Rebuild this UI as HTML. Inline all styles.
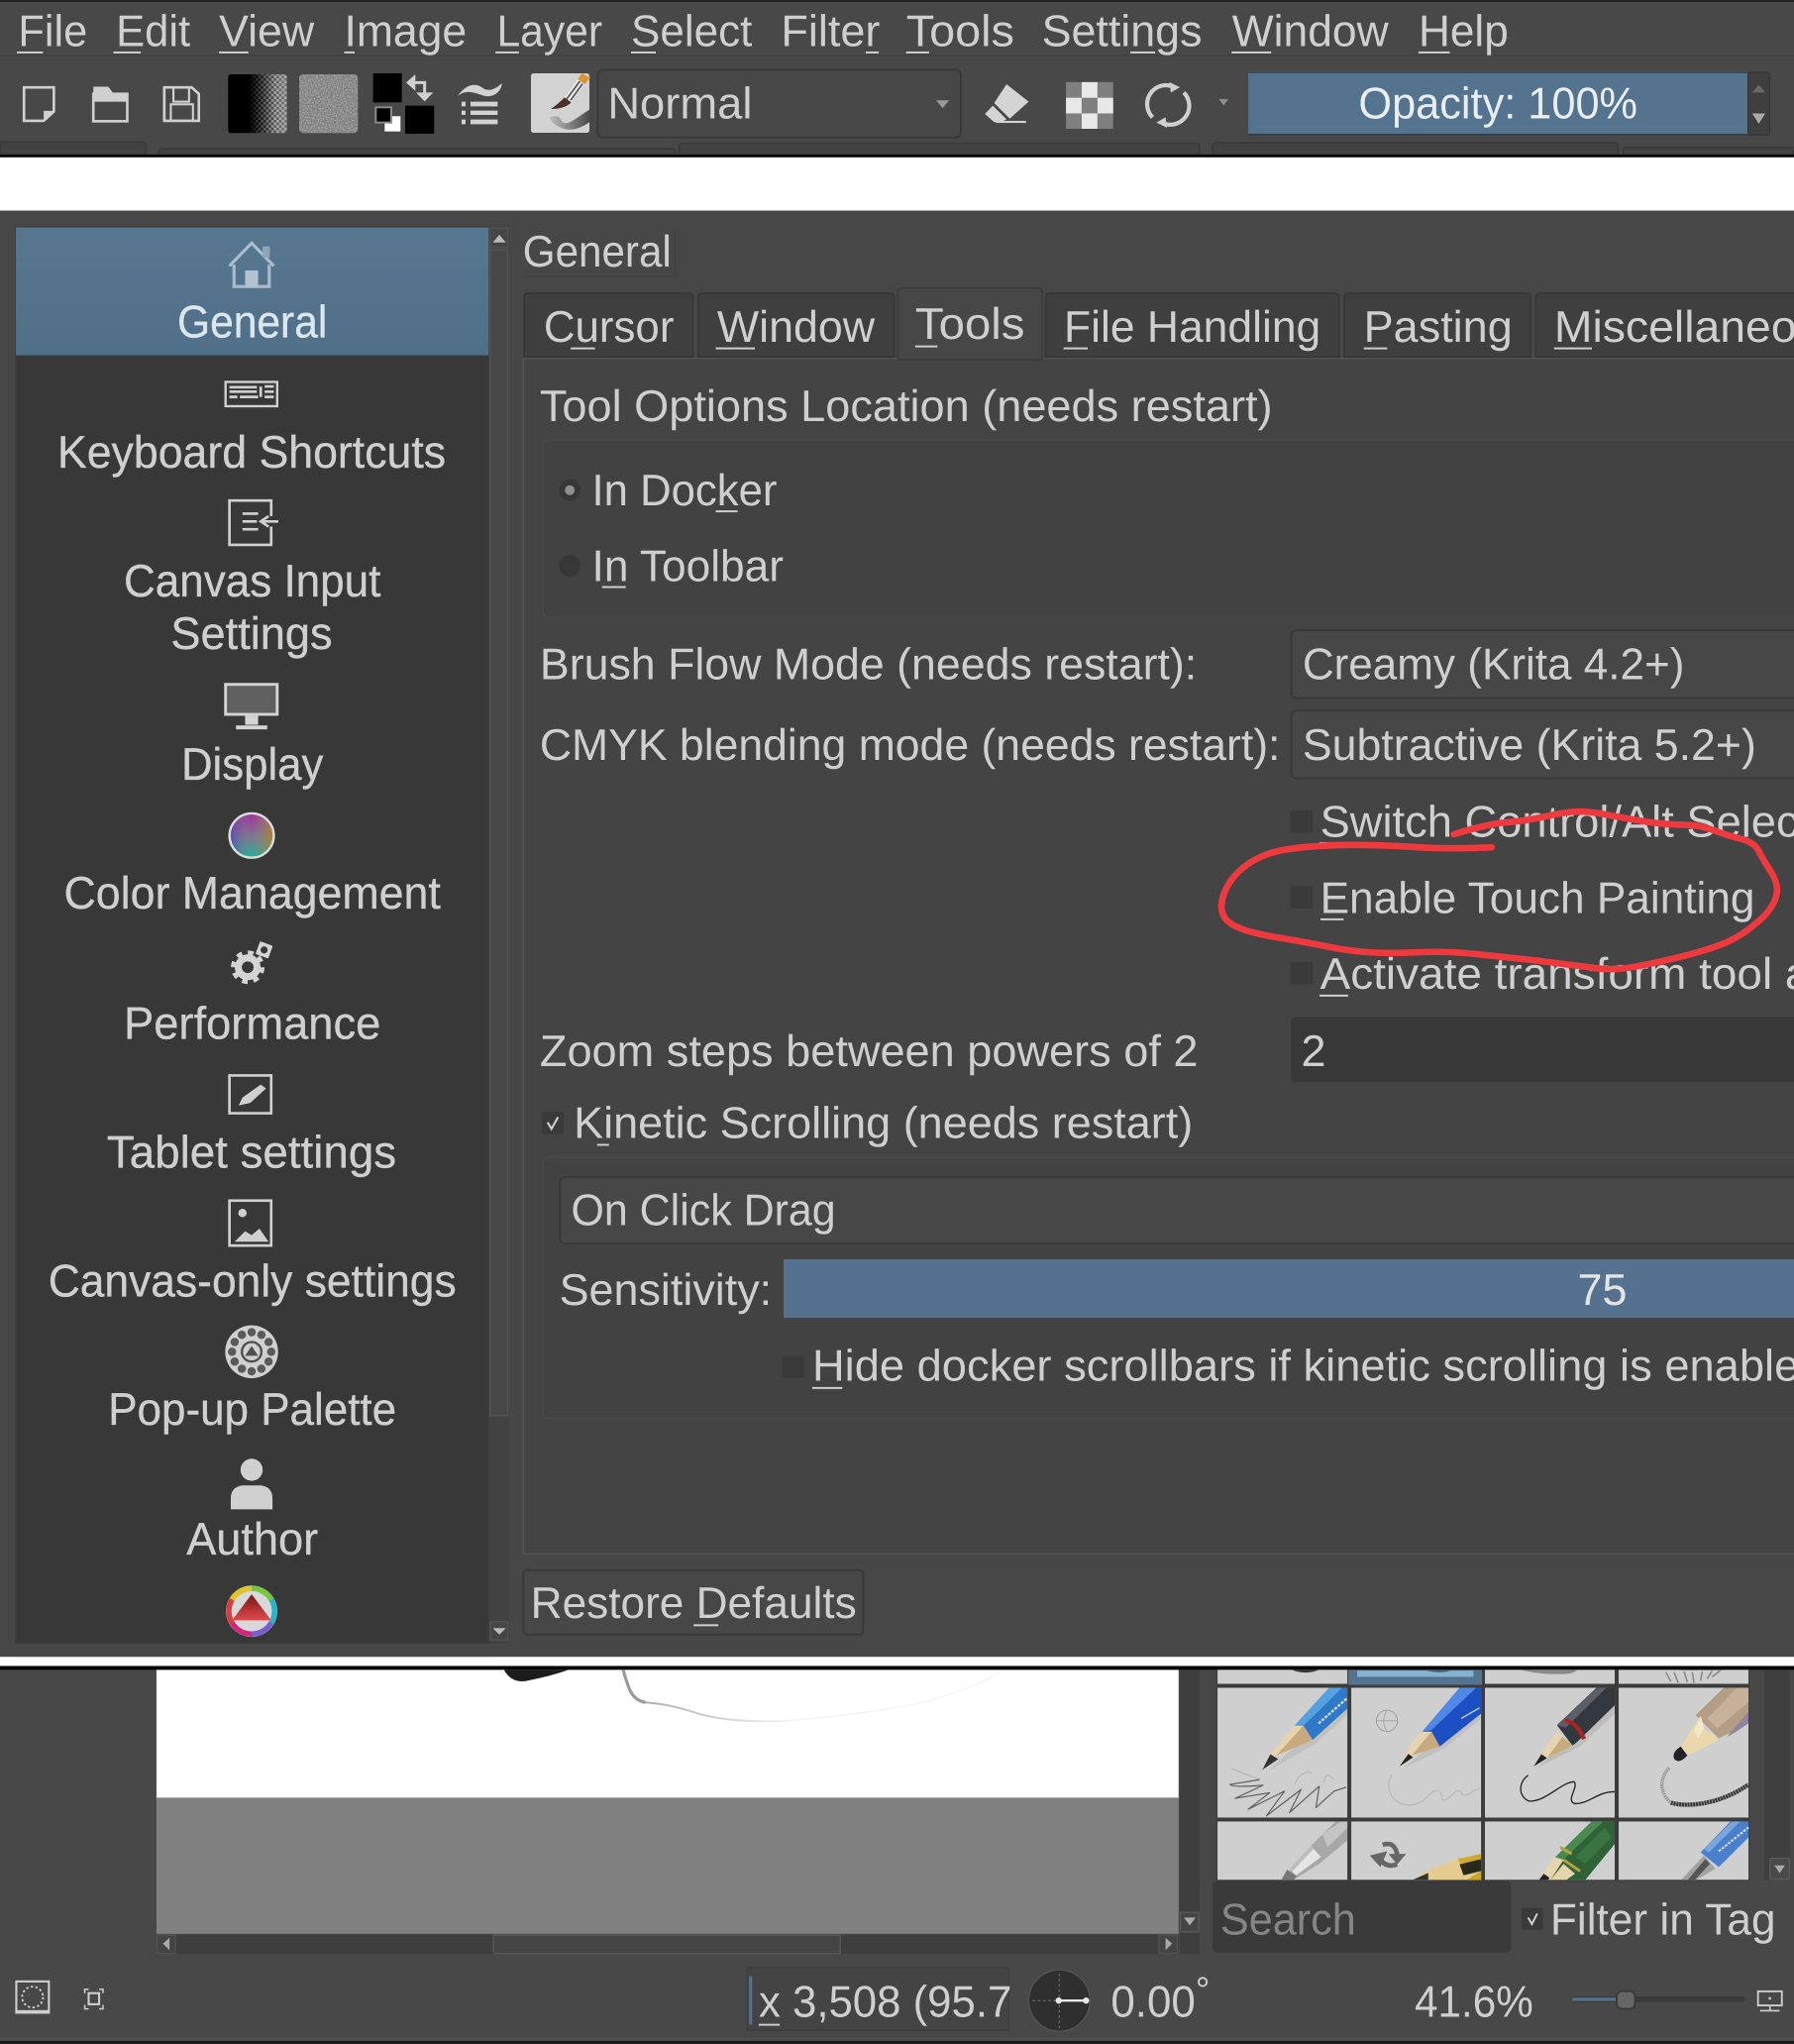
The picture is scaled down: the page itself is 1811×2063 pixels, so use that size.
<!DOCTYPE html>
<html><head><meta charset="utf-8"><title>Krita General Settings</title>
<style>
html,body{margin:0;padding:0;background:#000;width:1811px;height:2063px;overflow:hidden}
svg{display:block}
text{font-family:"Liberation Sans",sans-serif;fill:#cfcfcf;font-size:34px;text-rendering:geometricPrecision}
.s{font-size:35px;stroke:#cfcfcf;stroke-width:.25px}
.u{fill:#cfcfcf}
</style></head><body>
<svg xmlns="http://www.w3.org/2000/svg" width="1811" height="2063" viewBox="0 0 1376 1568" preserveAspectRatio="none">
<defs>
<pattern id="dith" width="4" height="4" patternUnits="userSpaceOnUse"><rect width="2" height="2" fill="#bbb"/><rect x="2" y="2" width="2" height="2" fill="#bbb"/></pattern>
<linearGradient id="gd" x1="0" x2="1" y1="0" y2="0"><stop offset="0" stop-color="#000"/><stop offset=".45" stop-color="#222"/><stop offset="1" stop-color="#777"/></linearGradient>
<linearGradient id="gf" x1="0" x2="1" y1="0" y2="0"><stop offset="0" stop-color="#000" stop-opacity="1"/><stop offset=".35" stop-color="#000" stop-opacity="1"/><stop offset=".8" stop-color="#000" stop-opacity="0"/></linearGradient>
<linearGradient id="sel" x1="0" x2="0" y1="0" y2="1"><stop offset="0" stop-color="#57768f"/><stop offset="1" stop-color="#507089"/></linearGradient>
<linearGradient id="cm" x1="0" x2="0" y1="0" y2="1"><stop offset="0" stop-color="#a52ea0"/><stop offset=".55" stop-color="#7e7a8e"/><stop offset="1" stop-color="#1bb39a"/></linearGradient>
<linearGradient id="cm2" x1="0" x2="1" y1="0" y2="0"><stop offset="0" stop-color="#4a3ec0" stop-opacity=".7"/><stop offset=".5" stop-color="#888" stop-opacity="0"/><stop offset="1" stop-color="#b08a20" stop-opacity=".8"/></linearGradient>
<linearGradient id="tri" x1="0" x2="0" y1="0" y2="1"><stop offset="0" stop-color="#7a1414"/><stop offset="1" stop-color="#e04a4a"/></linearGradient>
<linearGradient id="scr" x1="0" x2="1" y1="0" y2="0"><stop offset="0" stop-color="#bdbdbd"/><stop offset="1" stop-color="#4a4a4a"/></linearGradient>
<linearGradient id="grst" x1="0" x2="1" y1="0" y2="0"><stop offset="0" stop-color="#b0b0b0"/><stop offset="1" stop-color="#f4f4f4"/></linearGradient>
<filter id="nz" x="0" y="0" width="1" height="1"><feTurbulence type="fractalNoise" baseFrequency=".9" numOctaves="2" seed="3"/><feColorMatrix type="matrix" values="0 0 0 0 .55  0 0 0 0 .55  0 0 0 0 .55  1.4 0 0 0 -.45"/><feComposite in2="SourceGraphic" operator="in"/></filter>
<clipPath id="cells"><rect x="933" y="1281" width="408.5" height="161"/></clipPath>
</defs>

<!-- backgrounds -->
<rect width="1376" height="1568" fill="#484848"/>
<rect y="0" width="1376" height="1.5" fill="#222"/>
<rect y="42" width="1376" height="1" fill="#414141"/>

<!-- menu -->
<text x="14" y="35.5" textLength="53" lengthAdjust="spacingAndGlyphs">File</text>
<text x="89" y="35.5" textLength="57" lengthAdjust="spacingAndGlyphs">Edit</text>
<text x="168" y="35.5" textLength="73" lengthAdjust="spacingAndGlyphs">View</text>
<text x="264" y="35.5" textLength="94" lengthAdjust="spacingAndGlyphs">Image</text>
<text x="381" y="35.5" textLength="81" lengthAdjust="spacingAndGlyphs">Layer</text>
<text x="484" y="35.5" textLength="93" lengthAdjust="spacingAndGlyphs">Select</text>
<text x="599" y="35.5" textLength="76" lengthAdjust="spacingAndGlyphs">Filter</text>
<text x="695" y="35.5" textLength="83" lengthAdjust="spacingAndGlyphs">Tools</text>
<text x="799" y="35.5" textLength="123" lengthAdjust="spacingAndGlyphs">Settings</text>
<text x="945" y="35.5" textLength="120" lengthAdjust="spacingAndGlyphs">Window</text>
<text x="1088" y="35.5" textLength="69" lengthAdjust="spacingAndGlyphs">Help</text>
<g class="u">
<rect x="13" y="39.5" width="20" height="1.5"/><rect x="87" y="39.5" width="21" height="1.5"/><rect x="168" y="39.5" width="22.5" height="1.5"/><rect x="264" y="39.5" width="8" height="1.5"/><rect x="380" y="39.5" width="18" height="1.5"/><rect x="484" y="39.5" width="19" height="1.5"/><rect x="664" y="39.5" width="10" height="1.5"/><rect x="695" y="39.5" width="17.6" height="1.5"/><rect x="867" y="39.5" width="19" height="1.5"/><rect x="944.6" y="39.5" width="30.4" height="1.5"/><rect x="1088" y="39.5" width="24" height="1.5"/>
</g>

<!-- toolbar icons -->
<path d="M18.4 67H41.3V85.5L33.5 92.7H18.4Z" fill="none" stroke="#d0d0d0" stroke-width="2"/>
<path d="M41.3 85L33.5 92.7V85Z" fill="#d0d0d0"/>
<path d="M71.6 66.5H83L87 71.5H97.5V78H71.6Z" fill="#d0d0d0"/><rect x="71.6" y="72" width="26" height="21" fill="none" stroke="#d0d0d0" stroke-width="2"/>
<path d="M126 67H147L152.5 72V92.7H126Z" fill="none" stroke="#d0d0d0" stroke-width="2"/><rect x="133" y="67" width="12" height="11" fill="none" stroke="#d0d0d0" stroke-width="1.6"/><rect x="131" y="80" width="17" height="12.7" fill="none" stroke="#d0d0d0" stroke-width="1.6"/>
<rect x="175" y="57" width="45" height="45" rx="2" fill="url(#gd)"/><rect x="175" y="57" width="45" height="45" rx="2" fill="url(#dith)" opacity=".8"/><rect x="175" y="57" width="45" height="45" rx="2" fill="url(#gf)"/>
<rect x="229.5" y="57" width="45" height="45" rx="3" fill="#7a7a7a"/><rect x="229.5" y="57" width="45" height="45" rx="3" fill="#7a7a7a" filter="url(#nz)"/>
<g transform="translate(281.1 45.6) scale(.2533)">
<rect x="20" y="42" width="87" height="88" fill="#000"/>
<rect x="117" y="140" width="88" height="85" fill="#000"/>
<rect x="55" y="172" width="48" height="46" fill="#fff"/>
<rect x="28" y="145" width="47" height="46" fill="#000" stroke="#8a8a8a" stroke-width="6"/>
<path d="M145 70H176V102" fill="none" stroke="#d0d0d0" stroke-width="9"/>
<path d="M120 70L148 45V95Z M150 100H202L176 127Z" fill="#d0d0d0"/>
<path d="M275 112C300 75 330 70 350 85C370 100 390 90 410 72C410 95 385 118 355 110C325 100 300 90 275 112Z" fill="#d2d2d2"/>
<path d="M288 128h12v14h-12zM315 128h82v14h-82zM288 155h12v13h-12zM315 155h82v13h-82zM288 182h12v14h-12zM315 182h82v14h-82z" fill="#d2d2d2"/>
<rect x="498" y="42" width="177" height="180" rx="8" fill="#d2d2d2"/>
<path d="M555 175Q585 165 590 185Q600 205 640 175L675 152V190Q625 225 585 205Q555 190 555 175Z" fill="url(#scr)"/>
<path d="M600 115L640 60L660 75L620 130Z" fill="#e8e8e8"/><path d="M606 120L646 66M618 124L654 74" stroke="#555" stroke-width="5"/>
<path d="M640 60L652 42L678 56L660 75Z" fill="#d9962e"/>
<path d="M558 150Q580 135 600 115L620 130Q600 150 558 150Z" fill="#4a3028"/>
</g>
<rect x="458.5" y="53.5" width="278.5" height="52" rx="4" fill="#474747" stroke="#3a3a3a" stroke-width="1.6"/>
<text x="466" y="91" textLength="111" lengthAdjust="spacingAndGlyphs">Normal</text>
<path d="M718 77H728L723 83Z" fill="#9a9a9a"/>
<path d="M772 64.6L789 78L774.5 91L762.5 79Z" fill="#d4d4d4"/><path d="M761.5 81L772 91.5L768 93.7H762.5L755.4 87.4Z" fill="#d4d4d4"/><rect x="764" y="92.7" width="23" height="1.6" fill="#d4d4d4"/>
<g fill="#e8e8e8"><rect x="817.6" y="63" width="36.2" height="35.8" fill="#7f7f7f"/><rect x="829.7" y="63" width="12" height="12"/><rect x="817.6" y="75" width="12" height="12"/><rect x="841.8" y="75" width="12" height="12"/><rect x="829.7" y="87" width="12" height="11.8"/></g>
<path d="M884 90A14.5 14.5 0 0 1 900 66.5M908 71A14.5 14.5 0 0 1 892 94.5" fill="none" stroke="#cfcfcf" stroke-width="3.2"/><path d="M897 63L905 67L898 71ZM895 98L887 94L894 90Z" fill="#cfcfcf"/>
<path d="M935 76H942L938.5 81Z" fill="#8c8c8c"/>
<rect x="957.4" y="55.2" width="383.4" height="48" fill="#54738f"/>
<rect x="957.4" y="55.2" width="383.4" height="1" fill="#3a4a58"/><rect x="957.4" y="102.6" width="383.4" height="1.2" fill="#333c44"/>
<rect x="1340.8" y="55.5" width="16.5" height="48" rx="2" fill="#3f3f3f" stroke="#363636"/>
<path d="M1344 71H1354L1349 65Z" fill="#6a6a6a"/><path d="M1344 87H1354L1349 95Z" fill="#aaa"/>
<text x="1042" y="91" textLength="214" lengthAdjust="spacingAndGlyphs" style="fill:#e8eef2">Opacity: 100%</text>
<!-- tab strip -->
<g fill="#424242" stroke="#393939" stroke-width="1.2"><path d="M0 109H110Q112 109 112 112V119H0Z"/><path d="M122 119V116Q122 114 125 114H515Q518 114 518 116V119Z"/><path d="M521 119V112Q521 110 524 110H917Q920 110 920 112V119Z"/><path d="M930 119V112Q930 109.5 933 109.5H1238Q1241 109.5 1241 112V119Z"/><path d="M1245 119V116Q1245 113 1248 113H1376V119Z"/></g>
<rect y="118.5" width="1376" height="2.2" fill="#000"/>
<rect y="120.7" width="1376" height="41" fill="#fff"/>

<!-- dialog -->
<rect y="161.6" width="1376" height="1110" fill="#474747"/>
<rect x="12" y="174" width="363" height="1087" fill="#383838" stroke="#3f3f3f" stroke-width="1"/>
<rect x="12.2" y="174.5" width="362.6" height="98" fill="url(#sel)"/>
<!-- sidebar scrollbar -->
<rect x="375.5" y="174" width="15" height="1087" fill="#424242"/>
<rect x="376" y="175" width="13.5" height="15" fill="#454545" stroke="#535353"/><path d="M378 186H388L383 180Z" fill="#bbb"/>
<rect x="376" y="191.5" width="13.5" height="894.5" fill="#474747" stroke="#555"/>
<rect x="376" y="1244" width="13.5" height="14" fill="#454545" stroke="#535353"/><path d="M378 1249H388L383 1254Z" fill="#bbb"/>

<!-- sidebar icons -->
<path d="M176 204L193 186.5L210 204" fill="none" stroke="#a9bdce" stroke-width="2.4"/><path d="M179.5 203V219.8H206.5V203" fill="none" stroke="#a9bdce" stroke-width="2.4"/><rect x="201.5" y="189" width="5.5" height="8.5" fill="#8fa5b8"/><rect x="188" y="207.5" width="10" height="12.5" fill="#b3c2cf"/>
<rect x="173" y="293" width="39.6" height="18.6" fill="none" stroke="#d0d0d0" stroke-width="1.8"/><path d="M176 297H197M176 300.5H197M176 304.5H182M184 304.5H198M200 296.5V304.5M203 296.5H210M203 300.5H210M203 304.5H210" stroke="#d0d0d0" stroke-width="2"/>
<path d="M208 396V384H176V418H208V404" fill="none" stroke="#d0d0d0" stroke-width="2"/><path d="M186 394H198M186 400H197M186 406H198" stroke="#d0d0d0" stroke-width="2"/><path d="M213.5 400H202M206 396L200 400L206 404" fill="none" stroke="#d0d0d0" stroke-width="2"/>
<rect x="173" y="525" width="39.6" height="23" fill="#606060" stroke="#d4d4d4" stroke-width="2.2"/><rect x="188" y="549" width="10" height="7" fill="#d4d4d4"/><rect x="181" y="556.5" width="24" height="3" fill="#d4d4d4"/>
<circle cx="193" cy="641" r="17" fill="url(#cm)" stroke="#dcdcdc" stroke-width="1.8"/><circle cx="193" cy="641" r="16" fill="url(#cm2)"/>
<circle cx="190" cy="742" r="7.2" fill="none" stroke="#d4d4d4" stroke-width="5.4"/><circle cx="190" cy="742" r="11.3" fill="none" stroke="#d4d4d4" stroke-width="3.2" stroke-dasharray="4.4 4.47"/>
<g transform="rotate(20 202.6 728.7)"><rect x="197.4" y="723.5" width="10.4" height="10.4" rx="1" fill="#d4d4d4"/><circle cx="202.6" cy="728.7" r="2.7" fill="#383838"/></g>
<g transform="translate(0 -1)"><rect x="176" y="826" width="32" height="29" fill="none" stroke="#d0d0d0" stroke-width="2"/><path d="M183 849L186 843L200 833L204 836L192 847Z" fill="#d0d0d0"/></g>
<g transform="translate(0 -2.5)"><rect x="176" y="923.5" width="32" height="34.5" fill="none" stroke="#d0d0d0" stroke-width="2"/><circle cx="186" cy="933" r="3.2" fill="#d0d0d0"/><path d="M180 955L188 947L193 950L199 945L206 955Z" fill="#d0d0d0"/></g>
<g transform="translate(0 -3)"><circle cx="193" cy="1040" r="20.3" fill="#d0d0d0"/>
<g fill="#5a5a5a"><circle cx="193" cy="1025" r="3.2"/><circle cx="200.5" cy="1027" r="3.2"/><circle cx="206" cy="1032.5" r="3.2"/><circle cx="208" cy="1040" r="3.2"/><circle cx="206" cy="1047.5" r="3.2"/><circle cx="200.5" cy="1053" r="3.2"/><circle cx="193" cy="1055" r="3.2"/><circle cx="185.5" cy="1053" r="3.2"/><circle cx="180" cy="1047.5" r="3.2"/><circle cx="178" cy="1040" r="3.2"/><circle cx="180" cy="1032.5" r="3.2"/><circle cx="185.5" cy="1027" r="3.2"/></g>
<circle cx="193" cy="1040" r="7.5" fill="none" stroke="#4f4f4f" stroke-width="1.8"/><path d="M193 1035.5L198 1043H188Z" fill="#4f4f4f"/></g>
<g transform="translate(0 -3.5)"><circle cx="193" cy="1131" r="8.5" fill="#d0d0d0"/><path d="M177 1161.4V1153Q177 1144 186 1143H200Q209 1144 209 1153V1161.4Z" fill="#d0d0d0"/></g>
<g transform="translate(0 -4)"><circle cx="193" cy="1240" r="19.7" fill="#d8d8d8"/>
<g fill="none" stroke-width="4"><circle cx="193" cy="1240" r="17.5" stroke="#26b6c8"/><path d="M178 1231A17.5 17.5 0 0 1 193 1222.5" stroke="#e4c420"/><path d="M193 1222.5A17.5 17.5 0 0 1 208 1231" stroke="#7cc63a"/><path d="M208 1249A17.5 17.5 0 0 1 193 1257.5" stroke="#7a5cd0"/><path d="M193 1257.5A17.5 17.5 0 0 1 178 1249" stroke="#d8247c"/><path d="M178 1249A17.5 17.5 0 0 1 178 1231" stroke="#e23a3a"/></g>
<path d="M193 1227L208 1247H178Z" fill="url(#tri)"/></g>
<rect x="12" y="1260" width="364" height="11" fill="#474747"/>
<rect x="12" y="1260" width="364" height="1" fill="#3b3b3b"/>

<!-- sidebar labels -->
<text class="s" x="136" y="258.7" textLength="115" lengthAdjust="spacingAndGlyphs" style="fill:#dbe6ef;stroke:#dbe6ef">General</text>
<text class="s" x="44" y="358.6" textLength="298" lengthAdjust="spacingAndGlyphs">Keyboard Shortcuts</text>
<text class="s" x="95" y="457.5" textLength="197" lengthAdjust="spacingAndGlyphs">Canvas Input</text>
<text class="s" x="131" y="498" textLength="124" lengthAdjust="spacingAndGlyphs">Settings</text>
<text class="s" x="139" y="598" textLength="109" lengthAdjust="spacingAndGlyphs">Display</text>
<text class="s" x="49" y="696.8" textLength="289" lengthAdjust="spacingAndGlyphs">Color Management</text>
<text class="s" x="95" y="797" textLength="197" lengthAdjust="spacingAndGlyphs">Performance</text>
<text class="s" x="82" y="895.6" textLength="222" lengthAdjust="spacingAndGlyphs">Tablet settings</text>
<text class="s" x="37" y="994.6" textLength="313" lengthAdjust="spacingAndGlyphs">Canvas-only settings</text>
<text class="s" x="83" y="1093" textLength="221" lengthAdjust="spacingAndGlyphs">Pop-up Palette</text>
<text class="s" x="143" y="1192.6" textLength="101" lengthAdjust="spacingAndGlyphs">Author</text>

<!-- right panel -->
<text x="401" y="204.6" textLength="114" lengthAdjust="spacingAndGlyphs">General</text>
<path d="M401 212.5H518V176" fill="none" stroke="#414141" stroke-width="1"/>
<rect x="401.5" y="275" width="980" height="917" fill="#444" stroke="#575757" stroke-width="1"/>
<g fill="#3f3f3f" stroke="#363636" stroke-width="1.2">
<path d="M402 274V228Q402 225 405 225H528Q531.5 225 531.5 228V274Z"/>
<path d="M535.5 274V228Q535.5 225 539 225H682Q685.8 225 685.8 228V274Z"/>
<path d="M802 274V228Q802 225 805 225H1023Q1027 225 1027 228V274Z"/>
<path d="M1031 274V228Q1031 225 1034 225H1171Q1174 225 1174 228V274Z"/>
<path d="M1178 274V228Q1178 225 1181 225H1380V274Z"/>
</g>
<path d="M688.6 276V224Q688.6 221 692 221H796Q799.3 221 799.3 224V276Z" fill="#474747" stroke="#3a3a3a" stroke-width="1.2"/>
<text x="417" y="262.4" textLength="100" lengthAdjust="spacingAndGlyphs">Cursor</text>
<text x="550" y="262.4" textLength="121" lengthAdjust="spacingAndGlyphs">Window</text>
<text x="702" y="260" textLength="84" lengthAdjust="spacingAndGlyphs">Tools</text>
<text x="816" y="262.4" textLength="197" lengthAdjust="spacingAndGlyphs">File Handling</text>
<text x="1046" y="262.4" textLength="114" lengthAdjust="spacingAndGlyphs">Pasting</text>
<text x="1192" y="262.4" textLength="186" lengthAdjust="spacingAndGlyphs">Miscellaneo</text>
<g class="u"><rect x="437.7" y="266.5" width="18.7" height="1.5"/><rect x="549" y="266.5" width="30" height="1.5"/><rect x="702" y="265" width="17" height="1.5"/><rect x="815.7" y="266.5" width="18.6" height="1.5"/><rect x="1046" y="266.5" width="18" height="1.5"/><rect x="1192" y="266.5" width="29" height="1.5"/></g>

<text x="414" y="323" textLength="562" lengthAdjust="spacingAndGlyphs">Tool Options Location (needs restart)</text>
<rect x="416.5" y="337.4" width="980" height="136.2" rx="4" fill="#424242" stroke="#4b4b4b" stroke-width="1"/>
<circle cx="437" cy="376" r="8.3" fill="#373737"/><circle cx="437" cy="376" r="3.8" fill="#8f8f8f"/>
<text x="454" y="387.5" textLength="142" lengthAdjust="spacingAndGlyphs">In Docker</text><rect class="u" x="549" y="391.5" width="16.7" height="1.5"/>
<circle cx="437" cy="434" r="8.3" fill="#373737"/>
<text x="454" y="445.8" textLength="147" lengthAdjust="spacingAndGlyphs">In Toolbar</text><rect class="u" x="461.8" y="449.6" width="18.2" height="1.5"/>

<text x="414" y="521" textLength="504" lengthAdjust="spacingAndGlyphs">Brush Flow Mode (needs restart):</text>
<rect x="990.5" y="483.5" width="420" height="52" rx="4" fill="#474747" stroke="#383838" stroke-width="1.5"/>
<text x="999" y="521" textLength="293" lengthAdjust="spacingAndGlyphs">Creamy (Krita 4.2+)</text>
<text x="414" y="583" textLength="568" lengthAdjust="spacingAndGlyphs">CMYK blending mode (needs restart):</text>
<rect x="990.5" y="545" width="420" height="52" rx="4" fill="#474747" stroke="#383838" stroke-width="1.5"/>
<text x="999" y="583" textLength="348" lengthAdjust="spacingAndGlyphs">Subtractive (Krita 5.2+)</text>

<rect x="989.8" y="621.7" width="17" height="17" rx="1" fill="#3a3a3a"/>
<text x="1012.5" y="641.7" textLength="367" lengthAdjust="spacingAndGlyphs">Switch Control/Alt Selec</text><rect class="u" x="1012" y="646" width="18" height="1.5"/>
<rect x="989.8" y="680" width="17" height="17" rx="1" fill="#3a3a3a"/>
<text x="1012.5" y="700.4" textLength="333.5" lengthAdjust="spacingAndGlyphs">Enable Touch Painting</text><rect class="u" x="1012.9" y="704.5" width="17.6" height="1.5"/>
<rect x="989.8" y="738" width="17" height="17" rx="1" fill="#3a3a3a"/>
<text x="1012.5" y="758.4" textLength="376" lengthAdjust="spacingAndGlyphs">Activate transform tool a</text><rect class="u" x="1012" y="763" width="22" height="1.5"/>

<text x="414" y="818" textLength="505" lengthAdjust="spacingAndGlyphs">Zoom steps between powers of 2</text>
<rect x="990" y="780" width="420" height="50" rx="4" fill="#383838"/>
<text x="998" y="818" textLength="19" lengthAdjust="spacingAndGlyphs">2</text>

<rect x="416" y="853" width="16.5" height="17" rx="1" fill="#3a3a3a"/><path d="M420 861L423 866L428 857" fill="none" stroke="#cfcfcf" stroke-width="1.6"/>
<text x="440" y="873" textLength="475" lengthAdjust="spacingAndGlyphs">Kinetic Scrolling (needs restart)</text><rect class="u" x="458" y="877.5" width="9" height="1.5"/>

<rect x="416.5" y="888" width="980" height="200" rx="4" fill="#424242" stroke="#4b4b4b" stroke-width="1"/>
<rect x="429.5" y="903" width="980" height="51" rx="4" fill="#474747" stroke="#383838" stroke-width="1.5"/>
<text x="438" y="940" textLength="203" lengthAdjust="spacingAndGlyphs">On Click Drag</text>
<text x="429" y="1001" textLength="163" lengthAdjust="spacingAndGlyphs">Sensitivity:</text>
<rect x="601" y="966" width="790" height="45" fill="#54728f"/>
<text x="1210" y="1001" textLength="38" lengthAdjust="spacingAndGlyphs" style="fill:#e4e4e4">75</text>
<rect x="600" y="1040" width="17" height="17" rx="1" fill="#3a3a3a"/>
<text x="623" y="1059" textLength="757" lengthAdjust="spacingAndGlyphs">Hide docker scrollbars if kinetic scrolling is enable</text><rect class="u" x="623" y="1064" width="23" height="1.5"/>

<rect x="401.5" y="1204.5" width="260.5" height="49.5" rx="3" fill="#474747" stroke="#393939" stroke-width="1.5"/>
<text x="407" y="1241" textLength="250" lengthAdjust="spacingAndGlyphs">Restore Defaults</text><rect class="u" x="532" y="1246" width="19" height="1.5"/>

<!-- separator -->
<rect y="1271" width="1376" height="7.6" fill="#fff"/>
<rect y="1278" width="1376" height="3" fill="#000"/>

<!-- lower workspace -->
<rect y="1281" width="1376" height="287" fill="#484848"/>
<rect x="120" y="1281" width="784" height="99" fill="#fff"/>
<rect x="120" y="1379" width="784" height="104.5" fill="#808080"/>
<path d="M386.6 1281Q392 1291 403 1289.6Q422 1286 436 1281Z" fill="#1c1c1c"/>
<path d="M478 1281C482 1295 484 1304 495 1306" fill="none" stroke="#9a9a9a" stroke-width="2.4"/>
<path d="M495 1306C510 1307 522 1310 537 1315C560 1321 585 1321 605 1320" fill="none" stroke="url(#grst)" stroke-width="1.5"/>
<path d="M605 1320C640 1317 680 1312 709 1305.7C735 1298 752 1292 767 1283" fill="none" stroke="#f4f4f4" stroke-width="1"/>
<rect x="120" y="1484" width="784" height="15" fill="#3e3e3e"/>
<rect x="120.5" y="1484.5" width="14" height="14" fill="#444" stroke="#525252"/><path d="M130 1486.5V1496L125 1491Z" fill="#aaa"/>
<rect x="378.5" y="1484.5" width="266" height="14" fill="#454545" stroke="#595959"/>
<rect x="889" y="1484.5" width="14" height="14" fill="#444" stroke="#525252"/><path d="M894 1486.5V1496L899 1491Z" fill="#aaa"/>
<rect x="905" y="1281" width="15" height="218" fill="#3e3e3e"/>
<rect x="905.5" y="1467" width="14" height="15" fill="#454545" stroke="#595959"/><path d="M908 1471H917L912.5 1477Z" fill="#aaa"/>
<rect x="920" y="1281" width="13" height="162" fill="#474747"/>

<!-- brush grid -->
<rect x="933" y="1281" width="409" height="162" fill="#3c3c3c"/>
<rect x="1353" y="1281" width="20" height="161" fill="#3f3f3f"/>
<rect x="1357.5" y="1425.6" width="15" height="16" rx="1" fill="#4a4a4a" stroke="#5a5a5a"/><path d="M1361 1431H1369L1365 1437Z" fill="#aaa"/>
<g clip-path="url(#cells)">
<g transform="translate(930.8 1280.3) scale(.2533)">
<rect x="12" y="0" width="393" height="45" fill="#cfcfcf"/>
<rect x="408" y="0" width="405" height="48" fill="#54738f"/><rect x="435" y="5" width="352" height="19" fill="#85b2d0"/>
<path d="M235 2Q280 20 320 2Z" fill="#333"/><path d="M645 5Q685 15 720 5Z" fill="#3f5666"/>
<rect x="12" y="57" width="393" height="393" fill="#cfcfcf"/>
<rect x="417" y="57" width="393" height="393" fill="#cfcfcf"/>
<rect x="12" y="462" width="393" height="178" fill="#cfcfcf"/>
<rect x="417" y="462" width="393" height="178" fill="#cfcfcf"/>
<!-- pencil 1 -->
<path d="M165 310L310 225L405 140V90Z" fill="#b4b4b4" opacity=".55"/>
<path d="M245 172L350 57H405V120L300 215Z" fill="#2f79c8"/>
<path d="M245 172L350 57H390L272 172Z" fill="#54a0e0"/>
<path d="M318 165L405 88" stroke="#cde" stroke-width="7" stroke-dasharray="9 4"/>
<path d="M148 305L172 258L245 172L272 172L300 215L190 262Z" fill="#e6d4ae"/>
<path d="M190 262L272 172L300 215Z" fill="#c6a97c"/>
<path d="M148 305L172 258L196 273Z" fill="#333"/>
<path d="M55 302L140 335" fill="none" stroke="#aaa" stroke-width="2.5"/>
<path d="M140 335L50 350Q60 360 150 352L65 392L170 375L105 425L215 370L160 445L265 365L230 435L320 355L310 420L365 370L402 358" fill="none" stroke="#5c5c5c" stroke-width="3.4" stroke-linejoin="round"/>
<path d="M245 350Q265 305 300 315M335 345Q335 305 365 335" fill="none" stroke="#aaa" stroke-width="2.2"/>
<!-- pencil 2 -->
<path d="M575 300L700 240L810 150V100Z" fill="#b4b4b4" opacity=".55"/>
<path d="M632 190L745 57H810V135L685 235Z" fill="#1c4fc4"/>
<path d="M632 190L745 57H795L660 185Z" fill="#4f88e6"/>
<path d="M750 150L805 118" stroke="#c9d7f0" stroke-width="4"/>
<path d="M563 295L600 225L632 190L660 190L685 235L600 262Z" fill="#e6d4ae"/>
<path d="M600 262L660 190L685 235Z" fill="#c6a97c"/>
<path d="M563 295L590 257L604 268Z" fill="#222"/>
<circle cx="525" cy="157" r="32" fill="none" stroke="#a0a0a0" stroke-width="3"/>
<path d="M493 157H557M525 125Q505 157 525 189" fill="none" stroke="#a0a0a0" stroke-width="2.4"/>
<path d="M540 320C515 360 540 415 600 412C650 405 650 365 680 368C700 375 680 405 705 395C730 380 735 360 750 372C755 400 780 370 808 360" fill="none" stroke="#b4b4b4" stroke-width="3"/>
<!-- silver -->
<path d="M205 640L295 535L370 462H405V520L320 590L240 640Z" fill="#a8a8a8"/>
<path d="M330 500L385 462H405V480L345 540Z" fill="#c4c4c4"/>
<path d="M230 605L295 535L325 570L250 625Z" fill="#e6e6e6"/>
<path d="M230 605L295 535L303 545L240 612Z" fill="#bdbdbd"/>
<path d="M205 640L222 608L252 628L240 640Z" fill="#777"/>
<!-- reload and yellow -->
<path d="M600 640L660 605L740 575L810 560V640Z" fill="#e4cc8e"/>
<path d="M740 575L810 560V578L748 592Z" fill="#cfa92d"/>
<path d="M745 592L810 576V612L757 625Z" fill="#28281a"/>
<path d="M810 612V640H765Z" fill="#c9a52c"/>
<path d="M600 640L650 618V640Z" fill="#333"/>
<path d="M512 533Q548 520 556 562" fill="none" stroke="#666" stroke-width="14"/><path d="M530 560H583L556 592Z" fill="#666"/>
<path d="M556 592Q515 605 500 565" fill="none" stroke="#666" stroke-width="14"/><path d="M473 565L526 552L505 600Z" fill="#666"/>
</g>
<g transform="translate(1132.1 1280.3) scale(.2533)">
<rect x="27" y="0" width="393" height="45" fill="#cfcfcf"/>
<rect x="432" y="0" width="393" height="45" fill="#cfcfcf"/>
<path d="M120 0Q200 18 250 15Q295 18 310 0Z" fill="#8a8a8a"/>
<path d="M575 10L590 38M600 10L612 42M630 8L640 40M655 10L660 42M685 8L680 36M715 6L700 30M740 4L715 24M620 2H750" stroke="#8c8c8c" stroke-width="5" fill="none"/>
<rect x="27" y="57" width="393" height="393" fill="#cfcfcf"/>
<rect x="432" y="57" width="393" height="393" fill="#cfcfcf"/>
<rect x="27" y="462" width="393" height="178" fill="#cfcfcf"/>
<rect x="432" y="462" width="393" height="178" fill="#cfcfcf"/>
<!-- pencil 3 -->
<path d="M185 300L315 235L420 135V90Z" fill="#b0b0b0" opacity=".6"/>
<path d="M245 170L365 57H420V110L305 222L292 232Z" fill="#33373e"/>
<path d="M245 170L368 57H395L272 178Z" fill="#5a5f68"/>
<path d="M270 156Q305 160 327 212" fill="none" stroke="#a82428" stroke-width="13"/>
<path d="M175 295L206 245L245 190L292 232L215 270Z" fill="#e6d4ae"/>
<path d="M215 270L262 205L292 232Z" fill="#c8ab7c"/>
<path d="M175 295L198 258L215 270Z" fill="#222"/>
<path d="M158 322C130 340 125 385 160 400C210 405 260 340 298 342C310 360 270 400 300 408C340 410 370 370 420 372" fill="none" stroke="#222" stroke-width="4"/>
<!-- pencil 4 -->
<path d="M665 140L750 57H825V165L735 210Z" fill="#b39d84"/>
<path d="M700 150L790 57H825V100L730 180Z" fill="#c6b29a"/>
<path d="M760 205L825 130V165L775 198Z" fill="#8f849c"/>
<path d="M620 235L680 142L690 180L720 200L735 215L640 262Z" fill="#e8d8ac"/>
<path d="M660 185L682 145L690 180L672 210Z" fill="#f2e8c8"/>
<path d="M620 235L640 262Q615 290 600 272Q592 252 620 235Z" fill="#23232a"/>
<path d="M585 300C555 330 555 375 590 405" fill="none" stroke="#8c8c8c" stroke-width="10" stroke-dasharray="4 3"/>
<path d="M590 405C640 420 740 410 825 350" fill="none" stroke="#3a3a3a" stroke-width="13" stroke-dasharray="7 1.5"/>
<!-- green -->
<path d="M240 570L350 462H420V530L330 640H225Z" fill="#2f6236"/>
<path d="M240 570L350 462H385L262 580Z" fill="#4a8a50"/>
<path d="M300 570L390 480L410 510L330 590Z" fill="#3a7440"/>
<path d="M255 540L290 560M265 578L315 612" stroke="#b8a040" stroke-width="9"/>
<path d="M190 635L240 570L265 578L225 640ZM225 640L265 590L300 620L272 640Z" fill="#e6d4ae"/>
<path d="M190 640L205 620L222 632L218 640Z" fill="#222"/>
<!-- pen -->
<path d="M680 555L770 462H825V510L735 600Z" fill="#4a7fcc"/>
<path d="M690 545L775 462H800L705 556Z" fill="#7aa6e0"/>
<path d="M735 552L825 480" stroke="#d8e4f4" stroke-width="6" stroke-dasharray="8 4"/>
<path d="M620 640L690 565L725 605L665 640Z" fill="#a2a2a2"/>
<path d="M640 640L695 575L708 590L662 640Z" fill="#555"/>
</g>
</g>

<!-- search -->
<rect x="930" y="1443" width="229" height="55" rx="4" fill="#3a3a3a"/>
<text x="936" y="1484" textLength="104" lengthAdjust="spacingAndGlyphs" style="fill:#868686">Search</text>
<rect x="1167" y="1463.5" width="16.5" height="17" rx="1" fill="#3a3a3a"/><path d="M1172 1471L1175 1476L1179 1468" fill="none" stroke="#cfcfcf" stroke-width="1.5"/>
<text x="1189" y="1484" textLength="173" lengthAdjust="spacingAndGlyphs">Filter in Tag</text>

<!-- status bar -->
<rect x="12.5" y="1520" width="25" height="24" fill="none" stroke="#cfcfcf" stroke-width="1.6"/><rect x="12.5" y="1542" width="25" height="2.5" fill="#cfcfcf"/>
<circle cx="25" cy="1532" r="8" fill="none" stroke="#cfcfcf" stroke-width="1.4" stroke-dasharray="1.8 1.8"/>
<rect x="68" y="1529" width="8" height="8.5" fill="none" stroke="#cfcfcf" stroke-width="1.6"/><path d="M65 1529V1526H68M76 1526H79V1529M79 1538V1541H76M68 1541H65V1538" fill="none" stroke="#cfcfcf" stroke-width="1.1"/>
<rect x="573" y="1509.5" width="201" height="48" fill="#444" stroke="#3c3c3c"/>
<rect x="574.5" y="1516" width="2.4" height="37" fill="#54738f"/>
<text x="582" y="1547" textLength="194" lengthAdjust="spacingAndGlyphs">x 3,508 (95.7</text><rect class="u" x="582" y="1552.5" width="16" height="1.5"/>
<circle cx="812.5" cy="1534.7" r="23.5" fill="#2f2f2f" stroke="#555" stroke-width="1"/>
<path d="M792 1534.7H812M812.5 1514V1556" stroke="#666" stroke-width="1" stroke-dasharray="2 2"/>
<path d="M812 1534.7H833" stroke="#e8e8e8" stroke-width="1.8"/><circle cx="812" cy="1534.7" r="2.4" fill="#e8e8e8"/><circle cx="833" cy="1534.7" r="2.4" fill="#e8e8e8"/>
<text x="852" y="1547" textLength="65" lengthAdjust="spacingAndGlyphs">0.00</text><text x="917" y="1536" textLength="11" lengthAdjust="spacingAndGlyphs" style="font-size:28px">°</text>
<text x="1085" y="1547" textLength="91" lengthAdjust="spacingAndGlyphs">41.6%</text>
<rect x="1206" y="1531.5" width="132.5" height="4.5" rx="2" fill="#3a3a3a"/><rect x="1206" y="1532.5" width="36" height="2.5" fill="#54738f"/>
<rect x="1240" y="1527.5" width="14" height="13.5" rx="4" fill="#666" stroke="#3a3a3a" stroke-width="1.4"/>
<rect x="1348.4" y="1527.6" width="18.3" height="10.8" fill="none" stroke="#cfcfcf" stroke-width="1.4"/><circle cx="1357.5" cy="1533" r="1" fill="#cfcfcf"/><path d="M1357.5 1538.5V1542.5M1350 1542.5H1365" stroke="#cfcfcf" stroke-width="1.2"/>
<rect y="1563.5" width="1376" height="1" fill="#555"/>
<rect y="1565.7" width="1376" height="2.3" fill="#1a1a1a"/>

<!-- red annotation -->
<path d="M1115 640Q1141 632 1156.5 630.7Q1172 629.4 1187 626Q1202 622.6 1211.5 622.6Q1221 622.6 1234.5 625.4Q1248 628 1263.5 630.5Q1279 632.7 1291 632.7Q1303 632.7 1314 636.8Q1325 641 1335 643.4Q1345 646 1348.5 652Q1352 659 1357.5 667.5Q1363 676 1363 682.5Q1363 689 1359 695Q1355 702 1346 709Q1337 717 1325 722.5Q1312.5 728 1292.5 733Q1273 738 1254.5 741.5Q1236 745 1219 742Q1202 740 1179.5 737Q1156.5 734.5 1133.5 732Q1111 729.5 1088 730.5Q1065 731.5 1049.5 730.5Q1034 729.5 1016 725.7Q997.5 722 977.5 718.7Q958 715.5 948.5 711Q939.4 706.7 937.5 700Q935.7 694 939 685Q942.5 676 950 668.7Q958 661 968.5 656.7Q979 652 999 650Q1019 648 1042 648.2Q1065 648.4 1088 650Q1111 651.5 1144 650" fill="none" stroke="#ee3a3f" stroke-width="5" stroke-linecap="round" stroke-linejoin="round"/>
</svg>
</body></html>
